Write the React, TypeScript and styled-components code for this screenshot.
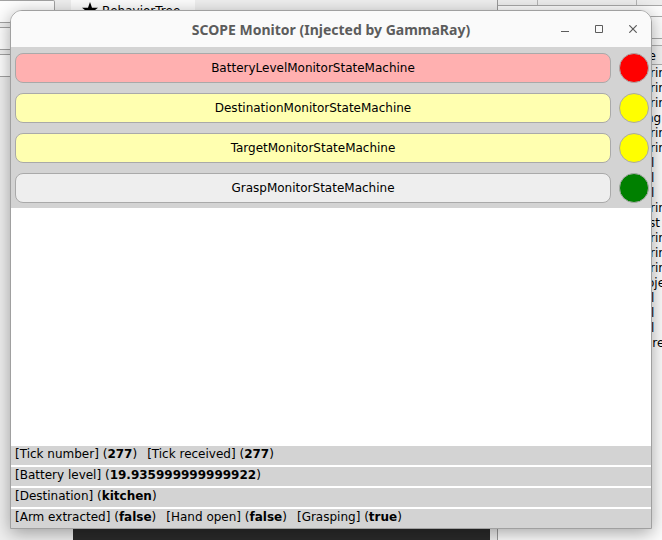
import React from "react";
import styled, { createGlobalStyle } from "styled-components";

const GlobalStyle = createGlobalStyle`
  * { box-sizing: border-box; }
  html, body, #root { height: 100%; }
  body {
    margin: 0;
    overflow: hidden;
    font-family: "DejaVu Sans", sans-serif;
    font-size: 12px;
    color: #000;
  }
  button { font: inherit; color: inherit; padding: 0; }
`;

const Screen = styled.div`
  position: relative;
  height: 100vh;
  padding: 10px 10px 11px;
  display: flex;
`;

/* Windows behind the dialog */
const Backdrop = styled.div`
  position: absolute;
  inset: 0;
  display: grid;
  grid-template-columns: minmax(0, 1fr) 164px;
  overflow: hidden;
`;

const EditorWindow = styled.div`
  display: grid;
  grid-template-columns: 55px 1fr;
  column-gap: 16px;
  background: #efefef;
  border-right: 1px solid #9a9a9a;
  min-width: 0;
`;

const FieldColumn = styled.div`
  display: flex;
  flex-direction: column;
  gap: 4px;
`;

const Field = styled.div`
  height: 23px;
  background: #fdfdfd;
  border: 1px solid #a2a2a2;
  border-left: 0;
  border-radius: 0 2px 2px 0;
`;

const EditorArea = styled.div`
  display: flex;
  flex-direction: column;
  justify-content: space-between;
  padding-right: 7px;
`;

const Tab = styled.div`
  display: flex;
  gap: 4px;
  width: 124px;
  height: 24px;
  padding: 2px 0 0 11px;
  background: #fcfcfc;
`;

const TabLabel = styled.span`
  line-height: 18px;
`;

const Canvas = styled.div`
  height: 12px;
  margin-left: 2px;
  background: #2a2a2a;
`;

const InspectorWindow = styled.div`
  display: flex;
  flex-direction: column;
  min-width: 0;
  background: #fcfcfc;
`;

const ColumnHeads = styled.div`
  display: grid;
  grid-template-columns: 40px 99px 1fr;
  height: 6px;
  background: #ededed;
  border-bottom: 1px solid #a8a8a8;
`;

const ColumnHead = styled.div`
  border-right: 1px solid #b4b4b4;
`;

const SearchBar = styled.div`
  height: 23px;
  margin: 10px 0 6px;
  border: solid #a8a8a8;
  border-width: 1px 0;
`;

const TypeHeader = styled.div`
  height: 20px;
  padding-right: 6px;
  line-height: 20px;
  text-align: right;
  background: #f3f3f3;
  border: solid #b0b0b0;
  border-width: 1px 0;
`;

const TypeList = styled.ul`
  list-style: none;
  width: 17px;
  margin: 1px 0 0 auto;
  padding: 0;
  line-height: 15px;
  white-space: nowrap;
`;

const TypeItem = styled.li<{ $indent: number }>`
  padding-left: ${(p) => p.$indent}px;
`;

/* The dialog itself */
const Dialog = styled.main`
  position: relative;
  flex: 1;
  display: flex;
  flex-direction: column;
  min-width: 0;
  overflow: hidden;
  background: #fff;
  border: 1px solid #a0a0a0;
  border-radius: 12px 12px 0 0;
  box-shadow: 0 4px 18px rgba(0, 0, 0, 0.35);
`;

const TitleBar = styled.header`
  display: grid;
  grid-template-columns: 1fr auto 1fr;
  align-items: center;
  height: 36px;
  background: #fafafa;
  color: #5c5c5c;
`;

const Title = styled.h1`
  grid-column: 2;
  margin: 0;
  padding-top: 2px;
  font: bold 14px/20px "Noto Sans", sans-serif;
`;

const WindowControls = styled.div`
  display: flex;
  justify-content: flex-end;
  gap: 10px;
  padding-right: 6px;
`;

const WindowButton = styled.button`
  display: flex;
  align-items: center;
  justify-content: center;
  width: 24px;
  height: 24px;
  background: none;
  border: 0;
`;

const MonitorPanel = styled.section`
  display: flex;
  flex-direction: column;
  gap: 10px;
  padding: 6px 2px 5px 4px;
  background: #d3d3d3;
`;

const MonitorRow = styled.div`
  display: flex;
  gap: 8px;
`;

const MonitorButton = styled.button<{ $fill: string }>`
  flex: 1;
  height: 30px;
  background: ${(p) => p.$fill};
  border: 1px solid #a9a9a9;
  border-radius: 8px;
`;

const Lamp = styled.div<{ $fill: string }>`
  width: 30px;
  height: 30px;
  background: ${(p) => p.$fill};
  border: 1px solid #a9a9a9;
  border-radius: 50%;
`;

const StatusList = styled.footer`
  display: flex;
  flex-direction: column;
  gap: 2px;
  margin-top: auto;
`;

const StatusLine = styled.div`
  display: flex;
  gap: 10px;
  height: 19px;
  padding-left: 4px;
  line-height: 16px;
  background: #d3d3d3;
`;

const monitors = [
  { name: "BatteryLevelMonitorStateMachine", fill: "#ffb0b0", lamp: "#ff0000" },
  { name: "DestinationMonitorStateMachine", fill: "#ffffb0", lamp: "#ffff00" },
  { name: "TargetMonitorStateMachine", fill: "#ffffb0", lamp: "#ffff00" },
  { name: "GraspMonitorStateMachine", fill: "#eeeeee", lamp: "#008000" },
];

const status = [
  [["Tick number", "277"], ["Tick received", "277"]],
  [["Battery level", "19.935999999999922"]],
  [["Destination", "kitchen"]],
  [["Arm extracted", "false"], ["Hand open", "false"], ["Grasping", "true"]],
];

const types = [
  "rin", "rin", "rin", "ng", "rin", "rin", "l", "l", "l", "rin",
  "st", "rin", "rin", "rin", "oje", "l", "l", "l", "are",
];

const typeIndent: Record<string, number> = { rin: 5, l: 6, st: 4, ng: 1, oje: 2, are: 0 };

export default function App() {
  return (
    <>
      <GlobalStyle />
      <Screen>
        <Backdrop>
          <EditorWindow>
            <FieldColumn>
              <Field />
              <Field />
              <Field />
            </FieldColumn>
            <EditorArea>
              <Tab>
                <svg width="16" height="16" viewBox="0 0 16 16" aria-hidden="true">
                  <path d="M8 0l2 5.8h6l-4.9 3.6 1.9 6L8 11.8l-5 3.6 1.9-6L0 5.8h6z" />
                </svg>
                <TabLabel>BehaviorTree</TabLabel>
              </Tab>
              <Canvas />
            </EditorArea>
          </EditorWindow>
          <InspectorWindow>
            <ColumnHeads>
              <ColumnHead />
              <ColumnHead />
            </ColumnHeads>
            <SearchBar />
            <TypeHeader>e</TypeHeader>
            <TypeList>
              {types.map((t, i) => (
                <TypeItem key={i} $indent={typeIndent[t]}>{t}</TypeItem>
              ))}
            </TypeList>
          </InspectorWindow>
        </Backdrop>

        <Dialog>
          <TitleBar>
            <Title>SCOPE Monitor (Injected by GammaRay)</Title>
            <WindowControls>
              <WindowButton aria-label="Minimize">
                <svg width="8" height="8" viewBox="0 0 8 8" fill="none" stroke="currentColor">
                  <path d="M0 6.5h8" />
                </svg>
              </WindowButton>
              <WindowButton aria-label="Maximize">
                <svg width="8" height="8" viewBox="0 0 8 8" fill="none" stroke="currentColor">
                  <path d="M.5.5h7v7h-7z" />
                </svg>
              </WindowButton>
              <WindowButton aria-label="Close">
                <svg width="8" height="8" viewBox="0 0 8 8" fill="none" stroke="currentColor" strokeWidth="1.2">
                  <path d="M.3.3l7.4 7.4M7.7.3L.3 7.7" />
                </svg>
              </WindowButton>
            </WindowControls>
          </TitleBar>

          <MonitorPanel>
            {monitors.map((m) => (
              <MonitorRow key={m.name}>
                <MonitorButton $fill={m.fill}>{m.name}</MonitorButton>
                <Lamp $fill={m.lamp} />
              </MonitorRow>
            ))}
          </MonitorPanel>

          <StatusList>
            {status.map((line, i) => (
              <StatusLine key={i}>
                {line.map(([label, value]) => (
                  <span key={label}>
                    [{label}] (<b>{value}</b>)
                  </span>
                ))}
              </StatusLine>
            ))}
          </StatusList>
        </Dialog>
      </Screen>
    </>
  );
}
